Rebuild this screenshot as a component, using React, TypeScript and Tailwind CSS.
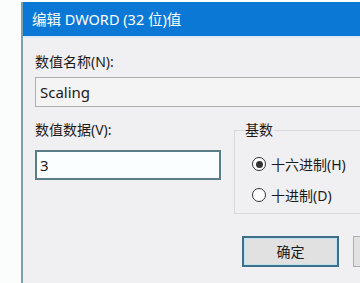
import React from "react";

const font = { fontFamily: '"Noto Sans", "Noto Sans CJK SC", sans-serif' };

export default function App() {
  return (
    <div
      className="w-[360px] h-[283px] bg-[#fbfdfd] overflow-hidden pt-[2px] pl-[21px]"
      style={font}
    >
      <div className="w-[420px] h-[281px] flex flex-col border-l-2 border-[#7f9fae] bg-[#f0eff1]">
        <div className="h-[34px] bg-[#0b78d6] flex items-center pl-[9px] text-white text-[14.5px] leading-none">
          编辑 DWORD (32 位)值
        </div>
        <div className="h-[2px] bg-[#dbe9f3]" />
        <div className="flex flex-col items-start pl-[12px] text-[14px] text-[#1a1a1a]">
          <div className="mt-[14px] h-[20px] leading-[20px]">数值名称(N):</div>
          <div className="mt-[5px] w-[380px] h-[30px] border border-[#aeaeae] bg-[#f5f4f5] flex items-center pl-[4px] text-[15px]">
            Scaling
          </div>
          <div className="flex items-start mt-[13px]">
            <div className="w-[186px] shrink-0 flex flex-col">
              <div className="h-[20px] leading-[20px]">数值数据(V):</div>
              <div className="mt-[10px] h-[30px] border-2 border-[#5b7d88] bg-[#fbfeff] flex items-center pl-[3px] text-[15px]">
                3
              </div>
            </div>
            <fieldset className="ml-[13px] mt-[1px] w-[200px] shrink-0 h-[93px] border border-[#d8d8d8] pl-[9px]">
              <legend className="px-[1px] leading-[18px]">基数</legend>
              <div className="flex flex-col pl-[8px] pt-[16px] gap-[13px]">
                <label className="flex items-center h-[18px]">
                  <span className="w-[14px] h-[14px] rounded-full border border-[#333] bg-white flex items-center justify-center">
                    <span className="w-[7px] h-[7px] rounded-full bg-[#333]" />
                  </span>
                  <span className="ml-[5px]">十六进制(H)</span>
                </label>
                <label className="flex items-center h-[18px]">
                  <span className="w-[14px] h-[14px] rounded-full border border-[#333] bg-white" />
                  <span className="ml-[5px]">十进制(D)</span>
                </label>
              </div>
            </fieldset>
          </div>
          <div className="flex mt-[22px] ml-[207px] gap-[14px]">
            <button className="w-[97px] shrink-0 h-[31px] border-2 border-[#3f6f86] bg-[#e1e1e1] shadow-[inset_0_0_0_1px_#bfe2f4] text-[14px] text-[#1a1a1a]">
              确定
            </button>
            <button className="w-[97px] shrink-0 h-[31px] border border-[#adadad] bg-[#e1e1e1]" />
          </div>
        </div>
      </div>
    </div>
  );
}
